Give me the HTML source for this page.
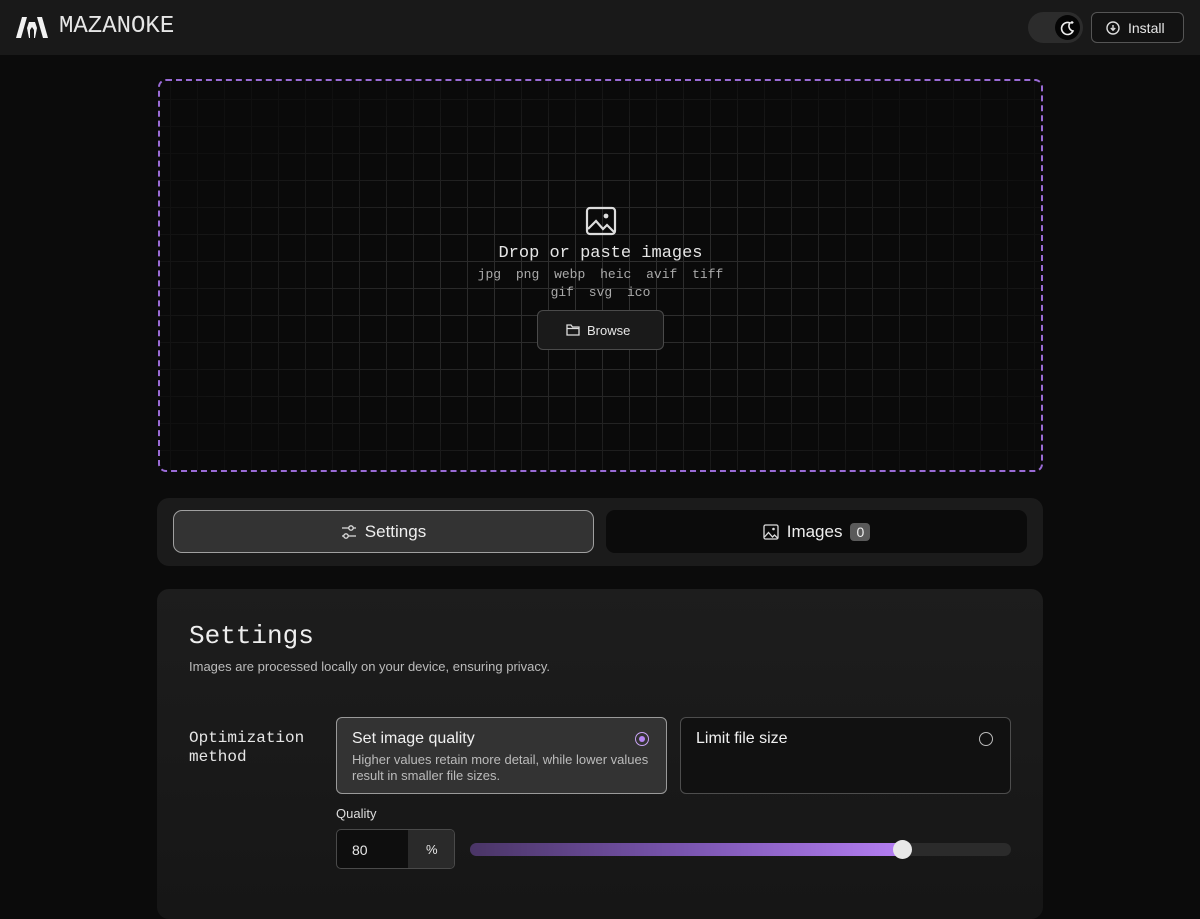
<!DOCTYPE html>
<html><head><meta charset="utf-8">
<style>
*{box-sizing:border-box;margin:0;padding:0}
body{width:1200px;height:899px;overflow:hidden;background:#0b0b0b;font-family:"Liberation Sans",sans-serif;color:#e8e8e8;position:relative}
.hdr{position:absolute;left:0;top:0;width:1200px;height:55px;background:#191919}
.logo{position:absolute;left:16px;top:17px}
.brand{position:absolute;left:59px;top:13px;font-family:"Liberation Mono",monospace;font-size:24px;color:#e6e6e6}
.tog{position:absolute;left:1028px;top:12px;width:55px;height:31px;border-radius:16px;background:#2c2c2c}
.tog .k{position:absolute;right:3px;top:3px;width:25px;height:25px;border-radius:50%;background:#050505}
.inst{position:absolute;left:1091px;top:12px;width:93px;height:31px;border:1px solid #555;border-radius:6px;background:#121212;font-size:14px;color:#e6e6e6}
.drop{position:absolute;left:158px;top:79px;width:885px;height:393px;border:2px dashed #9a6bd6;border-radius:8px;background:#0a0a0a;overflow:hidden}
.grid{position:absolute;inset:0;background-image:linear-gradient(#333 1px,transparent 1px),linear-gradient(90deg,#333 1px,transparent 1px);background-size:27px 27px;background-position:10px 18px;-webkit-mask-image:radial-gradient(ellipse 55% 60% at 50% 55%,#000 0%,rgba(0,0,0,.7) 45%,rgba(0,0,0,.15) 100%)}
.mono{font-family:"Liberation Mono",monospace}
.tabs{position:absolute;left:157px;top:498px;width:886px;height:68px;border-radius:12px;background:#1b1b1b}
.tab1{position:absolute;left:16px;top:12px;width:421px;height:43px;border:1.5px solid #a0a0a0;border-radius:9px;background:#333;display:flex;align-items:center;justify-content:center;font-size:17px;color:#eee;gap:8px}
.tab2{position:absolute;left:449px;top:12px;width:421px;height:43px;border-radius:9px;background:#0b0b0b;display:flex;align-items:center;justify-content:center;font-size:17px;color:#eee;gap:8px}
.badge{background:#5a5a5a;border-radius:4px;padding:1px 6px;font-size:14px}
.panel{position:absolute;left:157px;top:589px;width:886px;height:330px;border-radius:12px;background:linear-gradient(180deg,#1d1d1d,#161616)}
.card{position:absolute;border-radius:6px;border:1px solid #4d4d4d}
</style></head><body>
<div class="hdr">
<svg class="logo" width="32" height="21" viewBox="0 0 32 21"><path d="M6 0h5L5 21H0z" fill="#f2f2f2"/><path d="M21 0h5l6 21h-5z" fill="#f2f2f2"/><path d="M13 5h6l2 6-2 10h-6l-2-10z" fill="#f2f2f2"/><path d="M14 13l2-3 2 3v8h-4z" fill="#191919"/></svg>
<div class="brand">MAZANOKE</div>
<div class="tog"><div class="k"><svg width="25" height="25" viewBox="0 0 25 25"><path d="M15 8a6 6 0 1 0 3 8 5 5 0 0 1-3-8z" fill="none" stroke="#eee" stroke-width="1.6"/><path d="M17 6v3M15.5 7.5h3" stroke="#eee" stroke-width="1.2"/></svg></div></div>
<div class="inst"><svg style="position:absolute;left:14px;top:8px" width="14" height="14" viewBox="0 0 14 14"><circle cx="7" cy="7" r="6" fill="none" stroke="#ddd" stroke-width="1.4"/><path d="M7 4v5M4.8 7l2.2 2.2L9.2 7" fill="none" stroke="#ddd" stroke-width="1.4"/></svg><span style="position:absolute;left:36px;top:7px">Install</span></div>
</div>
<div class="drop"><div class="grid"></div>
<svg style="position:absolute;left:425px;top:125px" width="32" height="30" viewBox="0 0 32 30"><rect x="2" y="2" width="28" height="26" rx="3" fill="none" stroke="#ddd" stroke-width="2.2"/><circle cx="21" cy="10" r="2.4" fill="#ddd"/><path d="M3 23l8-8 7 8 4-4 7 7" fill="none" stroke="#ddd" stroke-width="2.2"/></svg>
<div class="mono" style="position:absolute;left:0;width:881px;top:163px;text-align:center;font-size:17px;color:#e6e6e6">Drop or paste images</div>
<div class="mono" style="position:absolute;left:0;width:881px;top:186px;text-align:center;font-size:13px;color:#aaa;word-spacing:7px">jpg png webp heic avif tiff</div>
<div class="mono" style="position:absolute;left:0;width:881px;top:204px;text-align:center;font-size:13px;color:#aaa;word-spacing:7px">gif svg ico</div>
<div style="position:absolute;left:377px;top:229px;width:127px;height:40px;border:1px solid #4a4a4a;border-radius:6px;background:#1a1a1a;font-size:13px;color:#e6e6e6"><svg style="position:absolute;left:28px;top:13px" width="14" height="12" viewBox="0 0 14 12"><path d="M1 1h4l1.5 2H13v8H1z M1 4.5h12" fill="none" stroke="#ddd" stroke-width="1.3"/></svg><span style="position:absolute;left:49px;top:12px">Browse</span></div>
</div>
<div class="tabs">
<div class="tab1"><svg width="16" height="16" viewBox="0 0 16 16"><path d="M1 4h14M1 12h14" stroke="#ddd" stroke-width="1.3"/><circle cx="10" cy="4" r="2.2" fill="#333" stroke="#ddd" stroke-width="1.3"/><circle cx="5" cy="12" r="2.2" fill="#333" stroke="#ddd" stroke-width="1.3"/></svg>Settings</div>
<div class="tab2"><svg width="16" height="16" viewBox="0 0 16 16"><rect x="1" y="1" width="14" height="14" rx="1.5" fill="none" stroke="#ddd" stroke-width="1.3"/><circle cx="10.5" cy="5" r="1.3" fill="#ddd"/><path d="M1.5 13l4-4.5 4 4.5 2-2 3 3" fill="none" stroke="#ddd" stroke-width="1.3"/></svg>Images <span class="badge">0</span></div>
</div>
<div class="panel">
<div class="mono" style="position:absolute;left:32px;top:32px;font-size:26px;color:#eee">Settings</div>
<div style="position:absolute;left:32px;top:70px;font-size:13px;color:#bbb">Images are processed locally on your device, ensuring privacy.</div>
<div class="mono" style="position:absolute;left:32px;top:140px;font-size:16px;line-height:19px;color:#e6e6e6">Optimization<br>method</div>
<div class="card" style="left:179px;top:128px;width:331px;height:77px;background:#333;border:1.5px solid #9a9a9a">
<div style="position:absolute;left:15px;top:12px;font-size:16px;color:#f0f0f0">Set image quality</div>
<div style="position:absolute;left:15px;top:34px;font-size:13px;line-height:16px;color:#bbb;width:305px">Higher values retain more detail, while lower values result in smaller file sizes.</div>
<div style="position:absolute;left:298px;top:14px;width:14px;height:14px;border-radius:50%;border:1.5px solid #c9a4f5"><div style="position:absolute;left:2.5px;top:2.5px;width:6px;height:6px;border-radius:50%;background:#b585f0"></div></div>
</div>
<div class="card" style="left:523px;top:128px;width:331px;height:77px;background:#111">
<div style="position:absolute;left:15px;top:12px;font-size:16px;color:#f0f0f0">Limit file size</div>
<div style="position:absolute;left:298px;top:14px;width:14px;height:14px;border-radius:50%;border:1.3px solid #bbb"></div>
</div>
<div style="position:absolute;left:179px;top:217px;font-size:13px;color:#ddd">Quality</div>
<div style="position:absolute;left:179px;top:240px;width:119px;height:40px;border:1px solid #4a4a4a;border-radius:5px;background:#0e0e0e;overflow:hidden">
<span style="position:absolute;left:15px;top:12px;font-size:14px">80</span>
<div style="position:absolute;left:71px;top:0;width:48px;height:40px;background:#2a2a2a"><span style="position:absolute;left:18px;top:12px;font-size:13px">%</span></div></div>
<div style="position:absolute;left:313px;top:254px;width:541px;height:13px;border-radius:7px;background:#2b2b2b">
<div style="width:433px;height:13px;border-radius:7px;background:linear-gradient(90deg,#4a3566,#7a55b0 50%,#b47ef2)"></div></div>
<div style="position:absolute;left:736px;top:251px;width:19px;height:19px;border-radius:50%;background:#e8e8e8"></div>
</div>
</body></html>
